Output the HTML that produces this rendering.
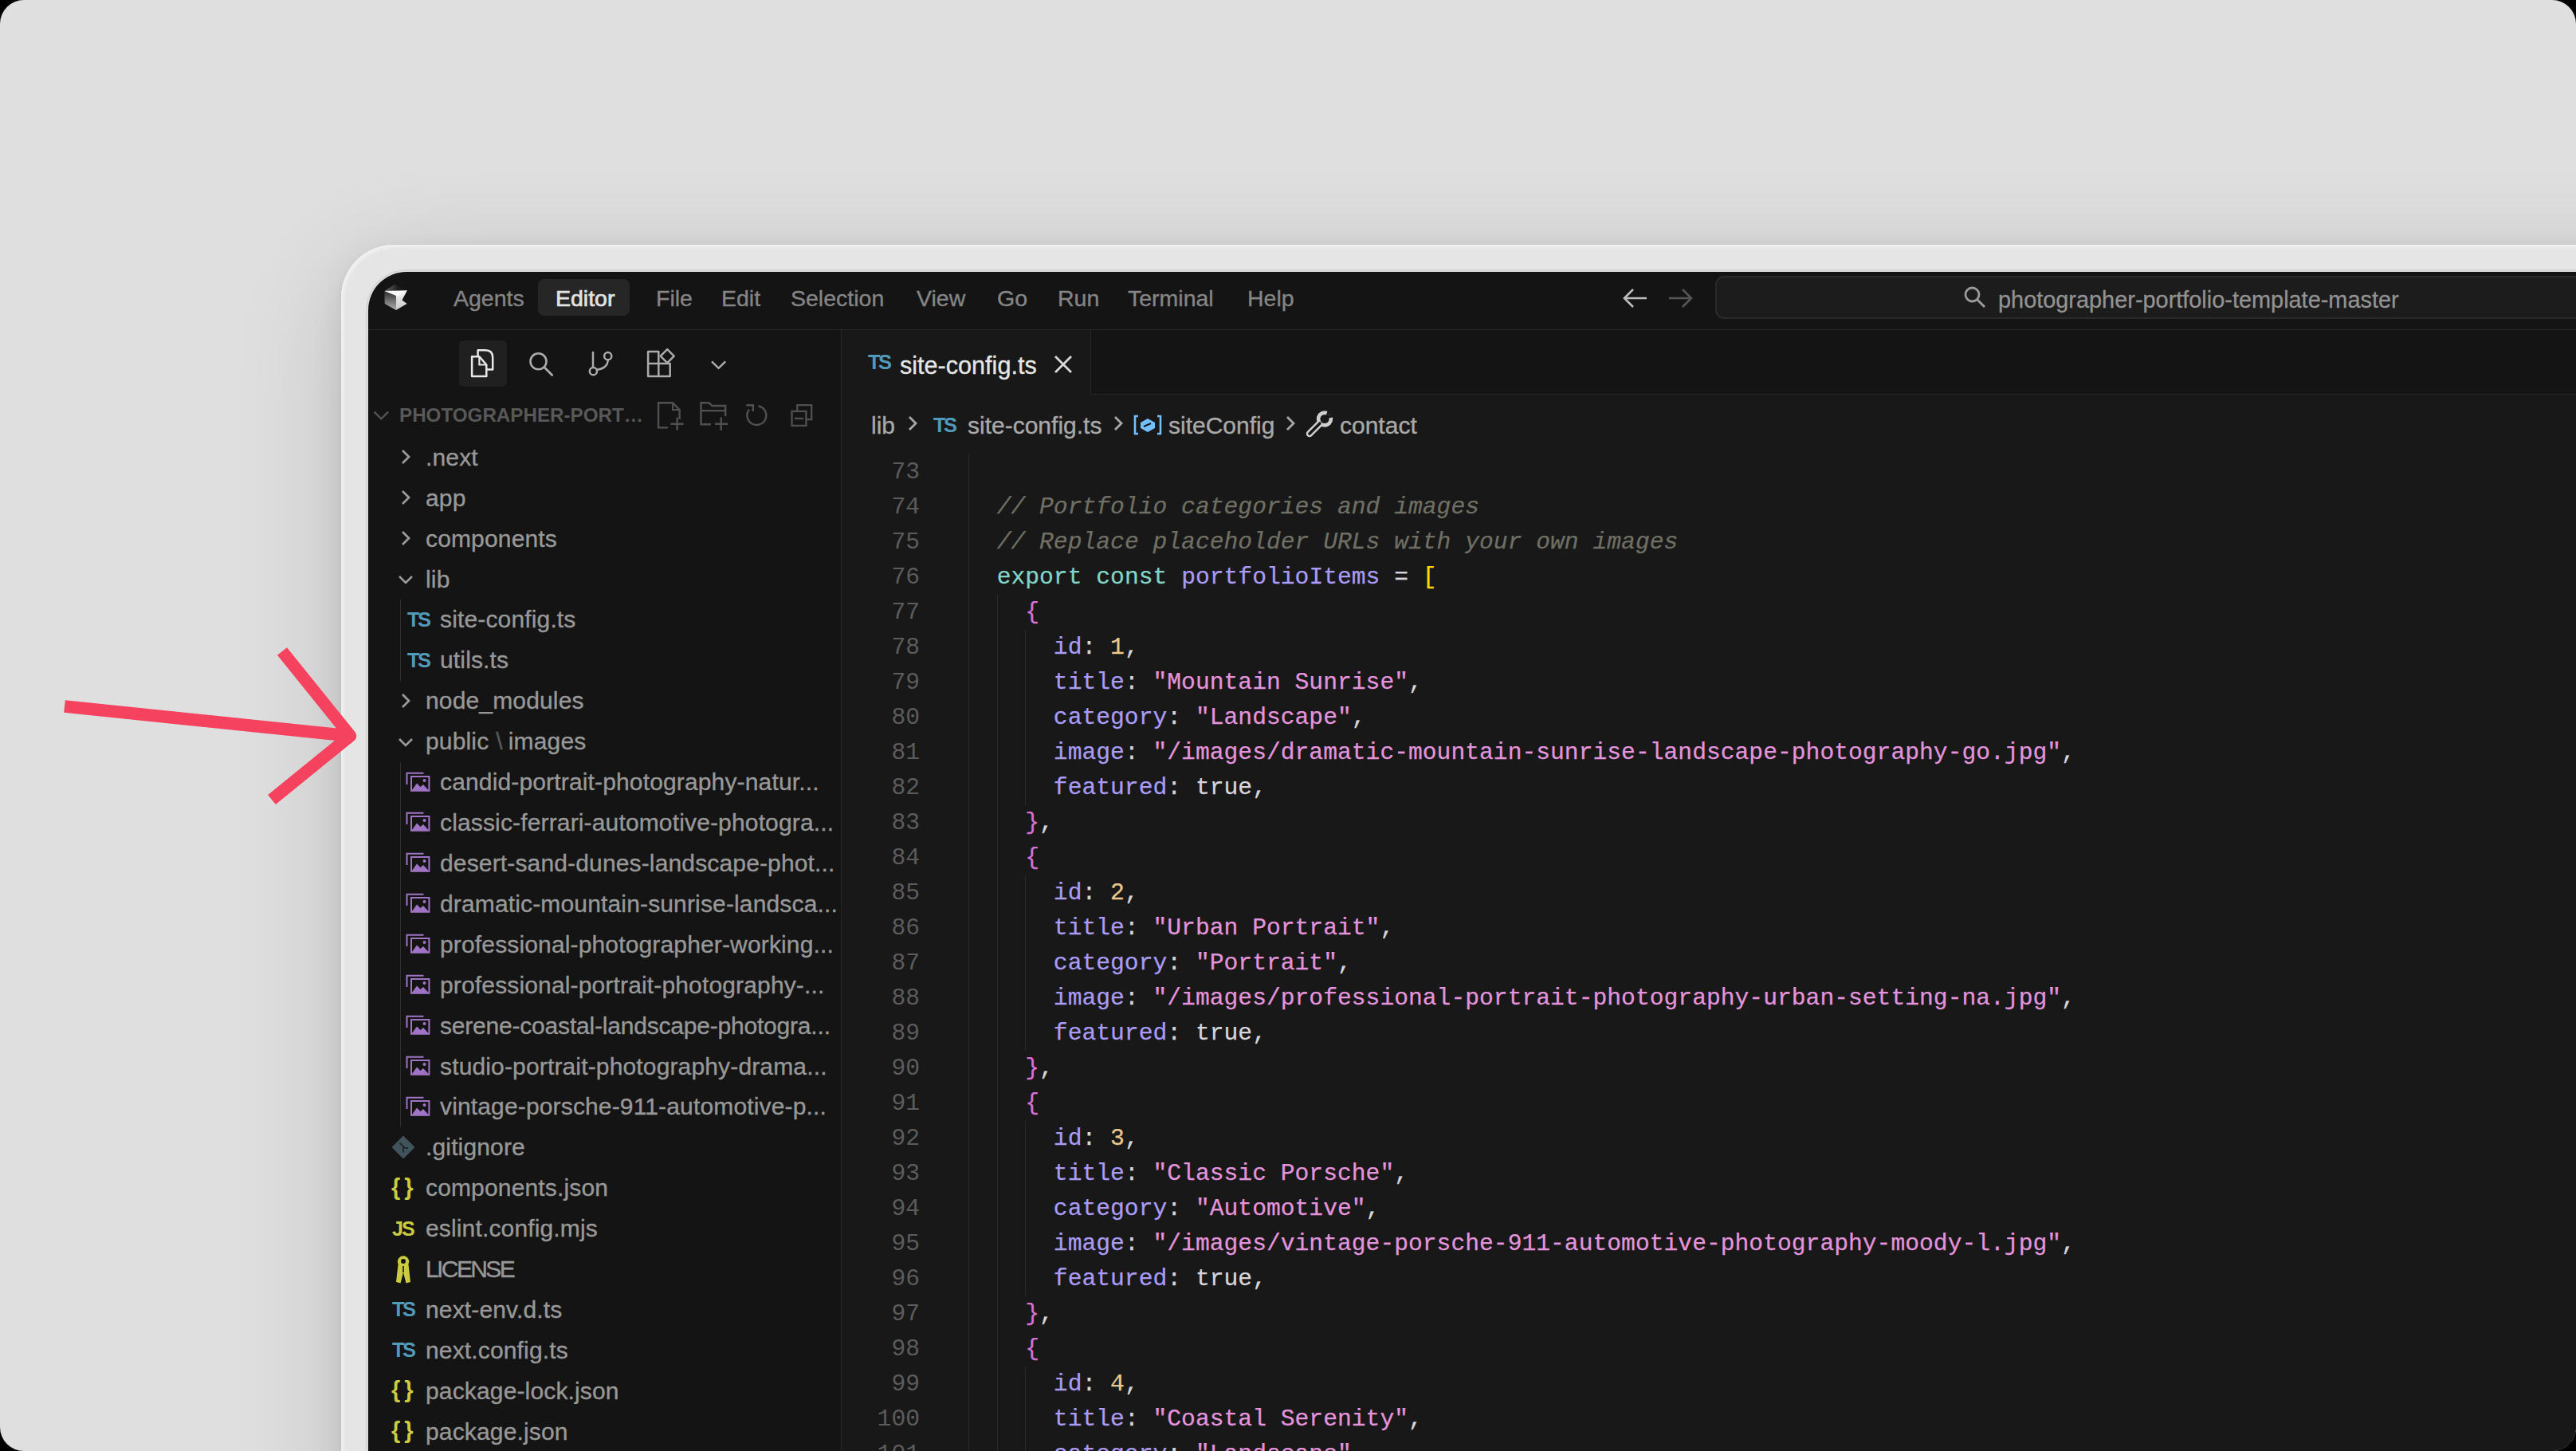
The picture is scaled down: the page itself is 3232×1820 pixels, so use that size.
<!DOCTYPE html>
<html><head><meta charset="utf-8"><title>Cursor</title>
<style>
html,body{margin:0;padding:0;width:3232px;height:1820px;overflow:hidden;background:#000;}
*{box-sizing:border-box;}
#page{position:absolute;left:0;top:0;width:3232px;height:1820px;border-radius:30px;overflow:hidden;background:#dfdfdf;font-family:"Liberation Sans",sans-serif;}
.a{position:absolute;white-space:pre;}
#frame{position:absolute;left:428px;top:307px;width:3000px;height:2000px;border-radius:66px;background:#e5e5e5;box-shadow:0 30px 140px rgba(0,0,0,0.14),0 12px 40px rgba(0,0,0,0.08),0 3px 8px rgba(0,0,0,0.05),inset 3px 3px 4px rgba(255,255,255,0.5);}
#win{position:absolute;left:462px;top:341px;width:3000px;height:2000px;border-radius:48px;background:#141414;box-shadow:0 0 0 1.5px rgba(255,255,255,0.25),0 0 0 3px rgba(0,0,0,0.07);}
.menu{font-size:28.5px;color:#858585;top:356px;line-height:36px;-webkit-text-stroke:0.35px currentColor;}
.tree{font-size:30px;color:#989898;line-height:50px;letter-spacing:0.15px;-webkit-text-stroke:0.35px currentColor;}
.code{font-family:"Liberation Mono",monospace;font-size:29.68px;line-height:44px;color:#d6d6dd;-webkit-text-stroke:0.25px currentColor;}
.ln{font-family:"Liberation Mono",monospace;font-size:29.68px;line-height:44px;color:#5c5c5c;text-align:right;width:120px;left:1034px;}
</style></head><body><div id="page">
<div id="frame"></div>
<div id="win"></div>

<div class="a" style="left:1056px;top:494px;width:2200px;height:1400px;background:#181818"></div>
<div class="a" style="left:1056px;top:414px;width:312px;height:81px;background:#181818"></div>
<div class="a" style="left:462px;top:413px;width:2800px;height:1px;background:#262626"></div>
<div class="a" style="left:1055px;top:414px;width:1px;height:1500px;background:#262626"></div>
<div class="a" style="left:1368px;top:494px;width:1900px;height:1px;background:#262626"></div>
<div class="a" style="left:1368px;top:414px;width:1px;height:80px;background:#262626"></div>
<div class="a" style="left:675px;top:350px;width:115px;height:46px;border-radius:8px;background:#262626"></div>
<div class="a menu" style="left:569px;color:#858585;">Agents</div>
<div class="a menu" style="left:697px;color:#e2e2e2;-webkit-text-stroke:0.7px currentColor;">Editor</div>
<div class="a menu" style="left:823px;">File</div>
<div class="a menu" style="left:905px;">Edit</div>
<div class="a menu" style="left:992px;">Selection</div>
<div class="a menu" style="left:1150px;">View</div>
<div class="a menu" style="left:1251px;">Go</div>
<div class="a menu" style="left:1327px;">Run</div>
<div class="a menu" style="left:1415px;">Terminal</div>
<div class="a menu" style="left:1565px;">Help</div>
<svg class="a" style="left:474px;top:350px" width="44" height="45" viewBox="0 0 44 45">
<defs><linearGradient id="lgL" x1="0" y1="0" x2="0" y2="1"><stop offset="0" stop-color="#2e2e2e"/><stop offset="1" stop-color="#b0b0b0"/></linearGradient>
<linearGradient id="lgT" x1="0" y1="0" x2="1" y2="0"><stop offset="0" stop-color="#6a6a6a"/><stop offset="0.6" stop-color="#1c1c1c"/></linearGradient>
<linearGradient id="lgR" x1="0" y1="0" x2="0" y2="1"><stop offset="0" stop-color="#f4f4f4"/><stop offset="1" stop-color="#c8c8c8"/></linearGradient></defs>
<polygon points="21.1,6.8 36.9,14.3 22.9,19.5 8.4,14.9" fill="url(#lgT)"/>
<polygon points="8.4,14.9 22.9,21 22.9,39.1 8.7,31" fill="url(#lgL)"/>
<polygon points="22.9,19.5 36.9,14.3 30.4,26.4 36.6,31 22.9,39.1" fill="url(#lgR)"/>
<polygon points="8.4,14.9 36.9,14.3 25,22 22.9,21" fill="#f8f8f8"/>
</svg>
<svg class="a" style="left:2032px;top:358px" width="40" height="32" viewBox="0 0 40 32"><path d="M6 16 H34 M17 5 L6 16 L17 27" stroke="#bdbdbd" stroke-width="2.6" fill="none"/></svg>
<svg class="a" style="left:2088px;top:358px" width="40" height="32" viewBox="0 0 40 32"><path d="M6 16 H34 M23 5 L34 16 L23 27" stroke="#555" stroke-width="2.6" fill="none"/></svg>
<div class="a" style="left:2152px;top:346px;width:1200px;height:54px;border-radius:11px;background:#1c1c1c;border:2px solid #2a2a2a"></div>
<svg class="a" style="left:2462px;top:357px" width="32" height="32" viewBox="0 0 32 32"><circle cx="12.5" cy="12.5" r="8.5" stroke="#9a9a9a" stroke-width="2.8" fill="none"/><path d="M19 19 L28 28" stroke="#9a9a9a" stroke-width="3" /></svg>
<div class="a" style="left:2507px;top:358px;font-size:28.9px;line-height:36px;color:#929292;-webkit-text-stroke:0.3px currentColor">photographer-portfolio-template-master</div>
<div class="a" style="left:576px;top:427px;width:60px;height:58px;border-radius:6px;background:#202020"></div>
<svg class="a" style="left:580px;top:430px" width="50" height="50" viewBox="580 430 50 50"><path d="M592.1,447.2 H601.4 L610.3,457.5 V471.9 H592.1 Z" stroke="#e8e8e8" stroke-width="2.5" fill="none" stroke-linejoin="round"/><path d="M601.4,447.2 V457.5 H610.3" stroke="#e8e8e8" stroke-width="2.2" fill="none"/><path d="M599.6,447 V439.3 H609 Q618.2,439.3 618.2,448.5 V463.5 H610.5" stroke="#e8e8e8" stroke-width="2.5" fill="none" stroke-linejoin="round"/></svg>
<svg class="a" style="left:655px;top:433px" width="45" height="45" viewBox="655 433 45 45"><circle cx="675.5" cy="453.3" r="10" stroke="#ababab" stroke-width="2.6" fill="none"/><path d="M683,460.8 L692.7,470.5" stroke="#ababab" stroke-width="2.8" stroke-linecap="round"/></svg>
<svg class="a" style="left:730px;top:433px" width="45" height="45" viewBox="730 433 45 45"><path d="M744,440.9 V460.5" stroke="#ababab" stroke-width="2.5"/><circle cx="744.4" cy="465.7" r="4.6" stroke="#ababab" stroke-width="2.5" fill="none"/><circle cx="762.7" cy="446.7" r="4.6" stroke="#ababab" stroke-width="2.5" fill="none"/><path d="M762.7,451.5 C762.7,460 756,462.5 748.5,464" stroke="#ababab" stroke-width="2.5" fill="none"/></svg>
<svg class="a" style="left:805px;top:430px" width="50" height="50" viewBox="805 430 50 50"><path d="M813.1,440.9 H826.3 V471.9 H813.1 Z M813.1,456 H840.7 V471.9 H826.3" stroke="#ababab" stroke-width="2.5" fill="none" stroke-linejoin="round"/><path d="M837.2,438.2 L845.7,446.7 L837.2,455.2 L828.7,446.7 Z" stroke="#ababab" stroke-width="2.5" fill="none" stroke-linejoin="round"/></svg>
<svg class="a" style="left:885px;top:445px" width="32" height="25" viewBox="885 445 32 25"><path d="M893,453.3 L901.6,461.8 L910.2,453.3" stroke="#ababab" stroke-width="2.5" fill="none"/></svg>
<svg class="a" style="left:462px;top:505px" width="35" height="32" viewBox="462 505 35 32"><path d="M469.5,516.5 L478.3,525.3 L487.1,516.5" stroke="#505050" stroke-width="2.5" fill="none"/></svg>
<div class="a" style="left:501px;top:505px;font-size:24.2px;line-height:32px;font-weight:bold;color:#585858">PHOTOGRAPHER-PORT…</div>
<svg class="a" style="left:815px;top:498px" width="220" height="47" viewBox="815 498 220 47"><path d="M838,536.4 H826.1 V505.3 H844 L852.6,514 V526" stroke="#505050" stroke-width="2.4" fill="none"/><path d="M844,505.3 V514 H852.6" stroke="#505050" stroke-width="2" fill="none"/><path d="M849.6,523.6 V539.5 M841.5,531.7 H857.7" stroke="#505050" stroke-width="2.4"/>
<path d="M891.9,532.2 H879.5 V505.3 H889.5 L893.5,509 H910.2 V522" stroke="#505050" stroke-width="2.4" fill="none"/><path d="M879.5,515.1 H910.2" stroke="#505050" stroke-width="2.2"/><path d="M904.7,523.6 V539.8 M897,531.7 H913.2" stroke="#505050" stroke-width="2.4"/>
<path d="M951.5,509.2 A12,12 0 1 1 940,513.5" stroke="#505050" stroke-width="2.4" fill="none"/><path d="M936.3,508.2 H944.8 V516" stroke="#505050" stroke-width="2.4" fill="none"/>
<path d="M1000.3,515.9 V508.2 H1018.2 V526.2 H1011.4" stroke="#505050" stroke-width="2.3" fill="none"/><path d="M993.5,515.9 H1011.4 V533.9 H993.5 Z" stroke="#505050" stroke-width="2.3" fill="none"/><path d="M996.9,524.9 H1008" stroke="#505050" stroke-width="2.3"/></svg>
<svg class="a" style="left:500px;top:562px" width="18" height="22" viewBox="0 0 18 22"><path d="M5 3 L13 11 L5 19" stroke="#9a9a9a" stroke-width="2.8" fill="none"/></svg>
<div class="a tree" style="left:534px;top:548.7px;height:50.92px;line-height:50.92px;">.next</div>
<svg class="a" style="left:500px;top:613px" width="18" height="22" viewBox="0 0 18 22"><path d="M5 3 L13 11 L5 19" stroke="#9a9a9a" stroke-width="2.8" fill="none"/></svg>
<div class="a tree" style="left:534px;top:599.6px;height:50.92px;line-height:50.92px;">app</div>
<svg class="a" style="left:500px;top:664px" width="18" height="22" viewBox="0 0 18 22"><path d="M5 3 L13 11 L5 19" stroke="#9a9a9a" stroke-width="2.8" fill="none"/></svg>
<div class="a tree" style="left:534px;top:650.5px;height:50.92px;line-height:50.92px;">components</div>
<svg class="a" style="left:498px;top:718px" width="22" height="18" viewBox="0 0 22 18"><path d="M3 5 L11 13 L19 5" stroke="#9a9a9a" stroke-width="2.6" fill="none"/></svg>
<div class="a tree" style="left:534px;top:701.5px;height:50.92px;line-height:50.92px;">lib</div>
<div class="a" style="left:511px;top:764px;font-size:25.5px;line-height:26px;font-weight:bold;color:#519aba;letter-spacing:-2.5px">TS</div>
<div class="a tree" style="left:552px;top:752.4px;height:50.92px;line-height:50.92px;">site-config.ts</div>
<div class="a" style="left:511px;top:815px;font-size:25.5px;line-height:26px;font-weight:bold;color:#519aba;letter-spacing:-2.5px">TS</div>
<div class="a tree" style="left:552px;top:803.3px;height:50.92px;line-height:50.92px;">utils.ts</div>
<svg class="a" style="left:500px;top:868px" width="18" height="22" viewBox="0 0 18 22"><path d="M5 3 L13 11 L5 19" stroke="#9a9a9a" stroke-width="2.8" fill="none"/></svg>
<div class="a tree" style="left:534px;top:854.2px;height:50.92px;line-height:50.92px;">node_modules</div>
<svg class="a" style="left:498px;top:922px" width="22" height="18" viewBox="0 0 22 18"><path d="M3 5 L11 13 L19 5" stroke="#9a9a9a" stroke-width="2.6" fill="none"/></svg>
<div class="a tree" style="left:534px;top:905.1px;height:50.92px;line-height:50.92px;">public<span style="color:#5a5a5a;margin:0 7px 0 9px">\</span>images</div>
<svg class="a" style="left:509px;top:968px" width="32" height="28" viewBox="0 0 32 28"><path d="M1.5 16 V1.8 H22.5" stroke="#a074c4" stroke-width="2" fill="none"/><rect x="7" y="6" width="22.4" height="17.8" fill="none" stroke="#a074c4" stroke-width="2"/><path d="M7.5 23.5 L14 14.5 L18.5 19 L22 16 L29 23.5 Z" fill="#a074c4"/><circle cx="23.5" cy="11" r="2" fill="#a074c4"/></svg>
<div class="a tree" style="left:552px;top:956.1px;height:50.92px;line-height:50.92px;">candid-portrait-photography-natur...</div>
<svg class="a" style="left:509px;top:1018px" width="32" height="28" viewBox="0 0 32 28"><path d="M1.5 16 V1.8 H22.5" stroke="#a074c4" stroke-width="2" fill="none"/><rect x="7" y="6" width="22.4" height="17.8" fill="none" stroke="#a074c4" stroke-width="2"/><path d="M7.5 23.5 L14 14.5 L18.5 19 L22 16 L29 23.5 Z" fill="#a074c4"/><circle cx="23.5" cy="11" r="2" fill="#a074c4"/></svg>
<div class="a tree" style="left:552px;top:1007.0px;height:50.92px;line-height:50.92px;">classic-ferrari-automotive-photogra...</div>
<svg class="a" style="left:509px;top:1069px" width="32" height="28" viewBox="0 0 32 28"><path d="M1.5 16 V1.8 H22.5" stroke="#a074c4" stroke-width="2" fill="none"/><rect x="7" y="6" width="22.4" height="17.8" fill="none" stroke="#a074c4" stroke-width="2"/><path d="M7.5 23.5 L14 14.5 L18.5 19 L22 16 L29 23.5 Z" fill="#a074c4"/><circle cx="23.5" cy="11" r="2" fill="#a074c4"/></svg>
<div class="a tree" style="left:552px;top:1057.9px;height:50.92px;line-height:50.92px;">desert-sand-dunes-landscape-phot...</div>
<svg class="a" style="left:509px;top:1120px" width="32" height="28" viewBox="0 0 32 28"><path d="M1.5 16 V1.8 H22.5" stroke="#a074c4" stroke-width="2" fill="none"/><rect x="7" y="6" width="22.4" height="17.8" fill="none" stroke="#a074c4" stroke-width="2"/><path d="M7.5 23.5 L14 14.5 L18.5 19 L22 16 L29 23.5 Z" fill="#a074c4"/><circle cx="23.5" cy="11" r="2" fill="#a074c4"/></svg>
<div class="a tree" style="left:552px;top:1108.8px;height:50.92px;line-height:50.92px;">dramatic-mountain-sunrise-landsca...</div>
<svg class="a" style="left:509px;top:1171px" width="32" height="28" viewBox="0 0 32 28"><path d="M1.5 16 V1.8 H22.5" stroke="#a074c4" stroke-width="2" fill="none"/><rect x="7" y="6" width="22.4" height="17.8" fill="none" stroke="#a074c4" stroke-width="2"/><path d="M7.5 23.5 L14 14.5 L18.5 19 L22 16 L29 23.5 Z" fill="#a074c4"/><circle cx="23.5" cy="11" r="2" fill="#a074c4"/></svg>
<div class="a tree" style="left:552px;top:1159.7px;height:50.92px;line-height:50.92px;">professional-photographer-working...</div>
<svg class="a" style="left:509px;top:1222px" width="32" height="28" viewBox="0 0 32 28"><path d="M1.5 16 V1.8 H22.5" stroke="#a074c4" stroke-width="2" fill="none"/><rect x="7" y="6" width="22.4" height="17.8" fill="none" stroke="#a074c4" stroke-width="2"/><path d="M7.5 23.5 L14 14.5 L18.5 19 L22 16 L29 23.5 Z" fill="#a074c4"/><circle cx="23.5" cy="11" r="2" fill="#a074c4"/></svg>
<div class="a tree" style="left:552px;top:1210.7px;height:50.92px;line-height:50.92px;">professional-portrait-photography-...</div>
<svg class="a" style="left:509px;top:1273px" width="32" height="28" viewBox="0 0 32 28"><path d="M1.5 16 V1.8 H22.5" stroke="#a074c4" stroke-width="2" fill="none"/><rect x="7" y="6" width="22.4" height="17.8" fill="none" stroke="#a074c4" stroke-width="2"/><path d="M7.5 23.5 L14 14.5 L18.5 19 L22 16 L29 23.5 Z" fill="#a074c4"/><circle cx="23.5" cy="11" r="2" fill="#a074c4"/></svg>
<div class="a tree" style="left:552px;top:1261.6px;height:50.92px;line-height:50.92px;letter-spacing:-0.2px;">serene-coastal-landscape-photogra...</div>
<svg class="a" style="left:509px;top:1324px" width="32" height="28" viewBox="0 0 32 28"><path d="M1.5 16 V1.8 H22.5" stroke="#a074c4" stroke-width="2" fill="none"/><rect x="7" y="6" width="22.4" height="17.8" fill="none" stroke="#a074c4" stroke-width="2"/><path d="M7.5 23.5 L14 14.5 L18.5 19 L22 16 L29 23.5 Z" fill="#a074c4"/><circle cx="23.5" cy="11" r="2" fill="#a074c4"/></svg>
<div class="a tree" style="left:552px;top:1312.5px;height:50.92px;line-height:50.92px;">studio-portrait-photography-drama...</div>
<svg class="a" style="left:509px;top:1375px" width="32" height="28" viewBox="0 0 32 28"><path d="M1.5 16 V1.8 H22.5" stroke="#a074c4" stroke-width="2" fill="none"/><rect x="7" y="6" width="22.4" height="17.8" fill="none" stroke="#a074c4" stroke-width="2"/><path d="M7.5 23.5 L14 14.5 L18.5 19 L22 16 L29 23.5 Z" fill="#a074c4"/><circle cx="23.5" cy="11" r="2" fill="#a074c4"/></svg>
<div class="a tree" style="left:552px;top:1363.4px;height:50.92px;line-height:50.92px;">vintage-porsche-911-automotive-p...</div>
<svg class="a" style="left:491px;top:1424px" width="30" height="30" viewBox="0 0 30 30"><path d="M15 1.5 L28.5 15 L15 28.5 L1.5 15 Z" fill="#41535b" stroke="#41535b" stroke-width="1.5" stroke-linejoin="round"/><path d="M10.5 9.5 L17 16 M15 14 V21.5 M17 16 H21" stroke="#1f2a2e" stroke-width="2"/></svg>
<div class="a tree" style="left:534px;top:1414.3px;height:50.92px;line-height:50.92px;">.gitignore</div>
<div class="a" style="left:491px;top:1474px;font-size:29px;line-height:30px;font-weight:bold;color:#cbcb41;letter-spacing:5px">{}</div>
<div class="a tree" style="left:534px;top:1465.3px;height:50.92px;line-height:50.92px;">components.json</div>
<div class="a" style="left:492px;top:1528px;font-size:25px;line-height:26px;font-weight:bold;color:#cbcb41;letter-spacing:-2px">JS</div>
<div class="a tree" style="left:534px;top:1516.2px;height:50.92px;line-height:50.92px;">eslint.config.mjs</div>
<svg class="a" style="left:495px;top:1574px" width="24" height="38" viewBox="0 0 24 38"><circle cx="11" cy="8.5" r="7.2" fill="#cbcb41"/><circle cx="11" cy="8" r="3" fill="#141414"/><path d="M4.5 12 L2 34 L7.5 35.5 L11 22 L14.5 35.5 L20 34 L17.5 12 Z" fill="#cbcb41"/><path d="M11 14 V22" stroke="#141414" stroke-width="1.6"/></svg>
<div class="a tree" style="left:534px;top:1567.1px;height:50.92px;line-height:50.92px;letter-spacing:-2.6px;">LICENSE</div>
<div class="a" style="left:492px;top:1629px;font-size:25.5px;line-height:26px;font-weight:bold;color:#519aba;letter-spacing:-2.5px">TS</div>
<div class="a tree" style="left:534px;top:1618.0px;height:50.92px;line-height:50.92px;">next-env.d.ts</div>
<div class="a" style="left:492px;top:1680px;font-size:25.5px;line-height:26px;font-weight:bold;color:#519aba;letter-spacing:-2.5px">TS</div>
<div class="a tree" style="left:534px;top:1668.9px;height:50.92px;line-height:50.92px;">next.config.ts</div>
<div class="a" style="left:491px;top:1728px;font-size:29px;line-height:30px;font-weight:bold;color:#cbcb41;letter-spacing:5px">{}</div>
<div class="a tree" style="left:534px;top:1719.9px;height:50.92px;line-height:50.92px;">package-lock.json</div>
<div class="a" style="left:491px;top:1779px;font-size:29px;line-height:30px;font-weight:bold;color:#cbcb41;letter-spacing:5px">{}</div>
<div class="a tree" style="left:534px;top:1770.8px;height:50.92px;line-height:50.92px;">package.json</div>
<div class="a" style="left:502px;top:752px;width:1px;height:102px;background:#2e2e2e"></div>
<div class="a" style="left:502px;top:956px;width:1px;height:458px;background:#2e2e2e"></div>
<div class="a" style="left:1089px;top:441px;font-size:25.5px;line-height:26px;font-weight:bold;color:#519aba;letter-spacing:-2.5px">TS</div>
<div class="a" style="left:1129px;top:440px;font-size:30.6px;line-height:36px;color:#e6e6e6;-webkit-text-stroke:0.3px currentColor">site-config.ts</div>
<svg class="a" style="left:1320px;top:443px" width="28" height="28" viewBox="0 0 28 28"><path d="M4 4 L24 24 M24 4 L4 24" stroke="#d8d8d8" stroke-width="2.8"/></svg>
<div class="a" style="left:1093px;top:516px;font-size:30px;line-height:36px;color:#a9a9a9;-webkit-text-stroke:0.35px currentColor">lib</div>
<svg class="a" style="left:1136px;top:520px" width="18" height="22" viewBox="0 0 18 22"><path d="M5 3 L13 11 L5 19" stroke="#a9a9a9" stroke-width="2.8" fill="none"/></svg>
<div class="a" style="left:1171px;top:520px;font-size:25.5px;line-height:26px;font-weight:bold;color:#519aba;letter-spacing:-2.5px">TS</div>
<div class="a" style="left:1214px;top:516px;font-size:30px;line-height:36px;color:#a9a9a9;-webkit-text-stroke:0.35px currentColor">site-config.ts</div>
<svg class="a" style="left:1394px;top:520px" width="18" height="22" viewBox="0 0 18 22"><path d="M5 3 L13 11 L5 19" stroke="#a9a9a9" stroke-width="2.8" fill="none"/></svg>
<svg class="a" style="left:1421px;top:520px" width="38" height="26" viewBox="0 0 38 26"><path d="M7 2 H3 V24 H7 M31 2 H35 V24 H31" stroke="#75beff" stroke-width="2.6" fill="none"/><path d="M19 5 L28 10 V17 L19 22 L10 17 V10 Z" fill="#75beff"/><path d="M14 15 L23 11" stroke="#181818" stroke-width="2"/></svg>
<div class="a" style="left:1466px;top:516px;font-size:30px;line-height:36px;color:#a9a9a9;-webkit-text-stroke:0.35px currentColor">siteConfig</div>
<svg class="a" style="left:1610px;top:520px" width="18" height="22" viewBox="0 0 18 22"><path d="M5 3 L13 11 L5 19" stroke="#a9a9a9" stroke-width="2.8" fill="none"/></svg>
<svg class="a" style="left:1630px;top:508px" width="50" height="48" viewBox="1630 508 50 48"><path d="M1643,544 L1656,531" stroke="#cfcfcf" stroke-width="8.5" stroke-linecap="round"/><circle cx="1662" cy="525.5" r="10.2" fill="#cfcfcf"/><path d="M1643,544 L1656,531" stroke="#181818" stroke-width="3.6" stroke-linecap="round"/><circle cx="1662" cy="525.5" r="5.6" fill="#181818"/><path d="M1662,525.5 L1676,511.5 L1683,521 Z" fill="#181818"/><path d="M1662,525.5 L1667,512 L1676,511.5 Z" fill="#181818"/></svg>
<div class="a" style="left:1681px;top:516px;font-size:30px;line-height:36px;color:#a9a9a9;-webkit-text-stroke:0.35px currentColor">contact</div>
<div class="a ln" style="top:569.6px">73</div>
<div class="a code" style="left:1215.0px;top:569.6px"></div>
<div class="a ln" style="top:613.6px">74</div>
<div class="a code" style="left:1215.0px;top:613.6px"><span style="color:#d6d6dd">  </span><span style="color:#6f6f64;font-style:italic">// Portfolio categories and images</span></div>
<div class="a ln" style="top:657.6px">75</div>
<div class="a code" style="left:1215.0px;top:657.6px"><span style="color:#d6d6dd">  </span><span style="color:#6f6f64;font-style:italic">// Replace placeholder URLs with your own images</span></div>
<div class="a ln" style="top:701.6px">76</div>
<div class="a code" style="left:1215.0px;top:701.6px"><span style="color:#d6d6dd">  </span><span style="color:#83d6c5">export</span><span style="color:#d6d6dd"> </span><span style="color:#83d6c5">const</span><span style="color:#d6d6dd"> </span><span style="color:#aa9bf5">portfolioItems</span><span style="color:#d6d6dd"> = </span><span style="color:#ffd700">[</span></div>
<div class="a ln" style="top:745.6px">77</div>
<div class="a code" style="left:1215.0px;top:745.6px"><span style="color:#d6d6dd">    </span><span style="color:#da70d6">{</span></div>
<div class="a ln" style="top:789.6px">78</div>
<div class="a code" style="left:1215.0px;top:789.6px"><span style="color:#d6d6dd">      </span><span style="color:#aa9bf5">id</span><span style="color:#d6d6dd">: </span><span style="color:#ebc88d">1</span><span style="color:#d6d6dd">,</span></div>
<div class="a ln" style="top:833.6px">79</div>
<div class="a code" style="left:1215.0px;top:833.6px"><span style="color:#d6d6dd">      </span><span style="color:#aa9bf5">title</span><span style="color:#d6d6dd">: </span><span style="color:#e394dc">"Mountain Sunrise"</span><span style="color:#d6d6dd">,</span></div>
<div class="a ln" style="top:877.6px">80</div>
<div class="a code" style="left:1215.0px;top:877.6px"><span style="color:#d6d6dd">      </span><span style="color:#aa9bf5">category</span><span style="color:#d6d6dd">: </span><span style="color:#e394dc">"Landscape"</span><span style="color:#d6d6dd">,</span></div>
<div class="a ln" style="top:921.6px">81</div>
<div class="a code" style="left:1215.0px;top:921.6px"><span style="color:#d6d6dd">      </span><span style="color:#aa9bf5">image</span><span style="color:#d6d6dd">: </span><span style="color:#e394dc">"/images/dramatic-mountain-sunrise-landscape-photography-go.jpg"</span><span style="color:#d6d6dd">,</span></div>
<div class="a ln" style="top:965.6px">82</div>
<div class="a code" style="left:1215.0px;top:965.6px"><span style="color:#d6d6dd">      </span><span style="color:#aa9bf5">featured</span><span style="color:#d6d6dd">: </span><span style="color:#d6d6dd">true</span><span style="color:#d6d6dd">,</span></div>
<div class="a ln" style="top:1009.6px">83</div>
<div class="a code" style="left:1215.0px;top:1009.6px"><span style="color:#d6d6dd">    </span><span style="color:#da70d6">}</span><span style="color:#d6d6dd">,</span></div>
<div class="a ln" style="top:1053.6px">84</div>
<div class="a code" style="left:1215.0px;top:1053.6px"><span style="color:#d6d6dd">    </span><span style="color:#da70d6">{</span></div>
<div class="a ln" style="top:1097.6px">85</div>
<div class="a code" style="left:1215.0px;top:1097.6px"><span style="color:#d6d6dd">      </span><span style="color:#aa9bf5">id</span><span style="color:#d6d6dd">: </span><span style="color:#ebc88d">2</span><span style="color:#d6d6dd">,</span></div>
<div class="a ln" style="top:1141.6px">86</div>
<div class="a code" style="left:1215.0px;top:1141.6px"><span style="color:#d6d6dd">      </span><span style="color:#aa9bf5">title</span><span style="color:#d6d6dd">: </span><span style="color:#e394dc">"Urban Portrait"</span><span style="color:#d6d6dd">,</span></div>
<div class="a ln" style="top:1185.6px">87</div>
<div class="a code" style="left:1215.0px;top:1185.6px"><span style="color:#d6d6dd">      </span><span style="color:#aa9bf5">category</span><span style="color:#d6d6dd">: </span><span style="color:#e394dc">"Portrait"</span><span style="color:#d6d6dd">,</span></div>
<div class="a ln" style="top:1229.6px">88</div>
<div class="a code" style="left:1215.0px;top:1229.6px"><span style="color:#d6d6dd">      </span><span style="color:#aa9bf5">image</span><span style="color:#d6d6dd">: </span><span style="color:#e394dc">"/images/professional-portrait-photography-urban-setting-na.jpg"</span><span style="color:#d6d6dd">,</span></div>
<div class="a ln" style="top:1273.6px">89</div>
<div class="a code" style="left:1215.0px;top:1273.6px"><span style="color:#d6d6dd">      </span><span style="color:#aa9bf5">featured</span><span style="color:#d6d6dd">: </span><span style="color:#d6d6dd">true</span><span style="color:#d6d6dd">,</span></div>
<div class="a ln" style="top:1317.6px">90</div>
<div class="a code" style="left:1215.0px;top:1317.6px"><span style="color:#d6d6dd">    </span><span style="color:#da70d6">}</span><span style="color:#d6d6dd">,</span></div>
<div class="a ln" style="top:1361.6px">91</div>
<div class="a code" style="left:1215.0px;top:1361.6px"><span style="color:#d6d6dd">    </span><span style="color:#da70d6">{</span></div>
<div class="a ln" style="top:1405.6px">92</div>
<div class="a code" style="left:1215.0px;top:1405.6px"><span style="color:#d6d6dd">      </span><span style="color:#aa9bf5">id</span><span style="color:#d6d6dd">: </span><span style="color:#ebc88d">3</span><span style="color:#d6d6dd">,</span></div>
<div class="a ln" style="top:1449.6px">93</div>
<div class="a code" style="left:1215.0px;top:1449.6px"><span style="color:#d6d6dd">      </span><span style="color:#aa9bf5">title</span><span style="color:#d6d6dd">: </span><span style="color:#e394dc">"Classic Porsche"</span><span style="color:#d6d6dd">,</span></div>
<div class="a ln" style="top:1493.6px">94</div>
<div class="a code" style="left:1215.0px;top:1493.6px"><span style="color:#d6d6dd">      </span><span style="color:#aa9bf5">category</span><span style="color:#d6d6dd">: </span><span style="color:#e394dc">"Automotive"</span><span style="color:#d6d6dd">,</span></div>
<div class="a ln" style="top:1537.6px">95</div>
<div class="a code" style="left:1215.0px;top:1537.6px"><span style="color:#d6d6dd">      </span><span style="color:#aa9bf5">image</span><span style="color:#d6d6dd">: </span><span style="color:#e394dc">"/images/vintage-porsche-911-automotive-photography-moody-l.jpg"</span><span style="color:#d6d6dd">,</span></div>
<div class="a ln" style="top:1581.6px">96</div>
<div class="a code" style="left:1215.0px;top:1581.6px"><span style="color:#d6d6dd">      </span><span style="color:#aa9bf5">featured</span><span style="color:#d6d6dd">: </span><span style="color:#d6d6dd">true</span><span style="color:#d6d6dd">,</span></div>
<div class="a ln" style="top:1625.6px">97</div>
<div class="a code" style="left:1215.0px;top:1625.6px"><span style="color:#d6d6dd">    </span><span style="color:#da70d6">}</span><span style="color:#d6d6dd">,</span></div>
<div class="a ln" style="top:1669.6px">98</div>
<div class="a code" style="left:1215.0px;top:1669.6px"><span style="color:#d6d6dd">    </span><span style="color:#da70d6">{</span></div>
<div class="a ln" style="top:1713.6px">99</div>
<div class="a code" style="left:1215.0px;top:1713.6px"><span style="color:#d6d6dd">      </span><span style="color:#aa9bf5">id</span><span style="color:#d6d6dd">: </span><span style="color:#ebc88d">4</span><span style="color:#d6d6dd">,</span></div>
<div class="a ln" style="top:1757.6px">100</div>
<div class="a code" style="left:1215.0px;top:1757.6px"><span style="color:#d6d6dd">      </span><span style="color:#aa9bf5">title</span><span style="color:#d6d6dd">: </span><span style="color:#e394dc">"Coastal Serenity"</span><span style="color:#d6d6dd">,</span></div>
<div class="a ln" style="top:1801.6px">101</div>
<div class="a code" style="left:1215.0px;top:1801.6px"><span style="color:#d6d6dd">      </span><span style="color:#aa9bf5">category</span><span style="color:#d6d6dd">: </span><span style="color:#e394dc">"Landscape"</span><span style="color:#d6d6dd">,</span></div>
<div class="a" style="left:1215px;top:570px;width:1px;height:1300px;background:#2a2a2a"></div>
<div class="a" style="left:1251px;top:746px;width:1px;height:1300px;background:#2a2a2a"></div>
<div class="a" style="left:1286px;top:790px;width:1px;height:220px;background:#2a2a2a"></div>
<div class="a" style="left:1286px;top:1098px;width:1px;height:220px;background:#2a2a2a"></div>
<div class="a" style="left:1286px;top:1406px;width:1px;height:220px;background:#2a2a2a"></div>
<div class="a" style="left:1286px;top:1714px;width:1px;height:176px;background:#2a2a2a"></div>
<svg class="a" style="left:0px;top:0px" width="600" height="1100" viewBox="0 0 600 1100"><path d="M81 886 L439 923" stroke="#f5425f" stroke-width="15.5" fill="none"/><path d="M354 817 L439.5 923 L341 1003" stroke="#f5425f" stroke-width="15.5" fill="none" stroke-linejoin="round"/></svg>
</div></body></html>
